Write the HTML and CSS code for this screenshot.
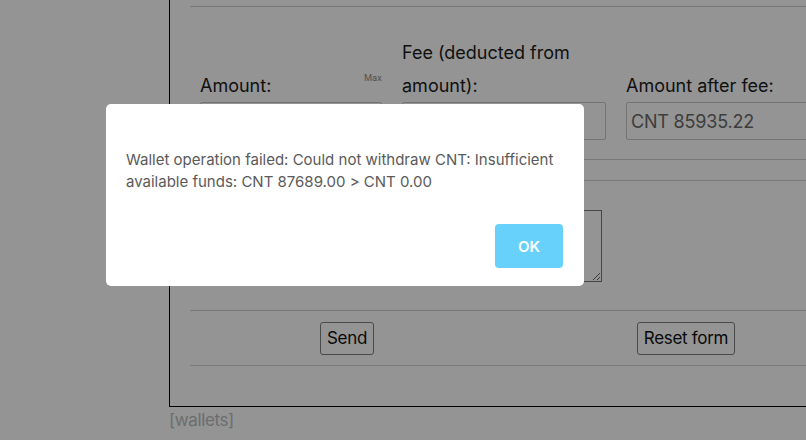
FILE: index.html
```html
<!DOCTYPE html>
<html lang="en">
<head>
    <meta charset="UTF-8">
    <meta name="viewport" content="width=device-width, initial-scale=1.0">
    <title>Withdraw</title>
    <link rel="stylesheet" href="styles.css">
</head>
<body>

    <div class="panel">
        <div class="row fields">
            <div class="cell">
                <div class="label-line">
                    <span class="label">Amount:</span>
                    <span class="max">Max</span>
                </div>
                <input class="field" type="text" value="">
            </div>
            <div class="cell">
                <span class="label">Fee (deducted from amount):</span>
                <input class="field" type="text" value="">
            </div>
            <div class="cell">
                <span class="label">Amount after fee:</span>
                <input class="field" type="text" value="CNT 85935.22">
            </div>
        </div>
        <div class="row spacer"></div>
        <div class="row note">
            <div class="cell"><span class="label">Note:</span></div>
            <div class="cell"><textarea class="memo"></textarea></div>
        </div>
        <div class="row actions">
            <div class="action"><button class="btn">Send</button></div>
            <div class="action"><button class="btn">Reset form</button></div>
        </div>
    </div>
    <div class="crumb">[wallets]</div>

    <div class="overlay">
        <div class="dialog">
            <p class="dialog-text">Wallet operation failed: Could not withdraw CNT: Insufficient available funds: CNT 87689.00 &gt; CNT 0.00</p>
            <div class="dialog-foot">
                <button class="ok">OK</button>
            </div>
        </div>
    </div>

</body>
</html>
```

FILE: styles.css
```css
* {
  box-sizing: border-box;
}
html, body {
  overflow: hidden;
}
body {
  margin: 0;
  padding-left: 169px;
  font-family: Inter, "Noto Sans", sans-serif;
  font-size: 18px;
  color: #1c1c1c;
  background: #fff;
  height: 440px;
}

.panel {
  width: 780px;
  border: 1px solid #000;
  border-top: none;
  padding: 6px 0 40px 20px;
}

.row {
  border-top: 1px solid #cfcfcf;
  display: flex;
}
.fields {
  height: 153px;
}
.cell {
  display: flex;
  flex-direction: column;
  justify-content: flex-end;
  padding: 0 10px 19px 10px;
  width: 224px;
}
.cell:first-child {
  width: 202px;
}
.label {
  line-height: 33px;
}
.label-line {
  display: flex;
  justify-content: space-between;
  align-items: flex-start;
}
.max {
  font-size: 9px;
  line-height: 18px;
  color: #8a8a8a;
}
.field {
  height: 38px;
  width: 100%;
  border: 1px solid #c8c8c8;
  border-radius: 2px;
  font-family: inherit;
  font-size: 18px;
  color: #6a6a6a;
  padding: 0 4px;
  letter-spacing: -0.2px;
}

.spacer {
  height: 21px;
}

.note {
  height: 130px;
}
.note .cell {
  justify-content: flex-start;
  padding-top: 29px;
}
.note .label {
  visibility: hidden;
}
.memo {
  width: 200px;
  height: 72px;
  border: 1px solid #777;
  resize: both;
}

.actions {
  height: 56px;
  border-bottom: 1px solid #cfcfcf;
  align-items: center;
}
.action {
  width: 314px;
  display: flex;
  justify-content: center;
}
.action:last-child {
  width: 364px;
}
.btn {
  font-family: inherit;
  font-size: 17px;
  letter-spacing: -0.3px;
  color: #111;
  background: #fff;
  border: 1px solid #808080;
  border-radius: 3px;
  height: 33px;
  padding: 0 6px;
}

.crumb {
  color: #b9bdc0;
  font-size: 17px;
  padding-top: 3px;
  letter-spacing: -0.4px;
}

.overlay {
  position: fixed;
  top: 0;
  left: 0;
  right: 0;
  bottom: 0;
  background: rgba(0, 0, 0, 0.42);
}
.dialog {
  position: absolute;
  left: 106px;
  top: 104px;
  width: 478px;
  height: 182px;
  background: #fff;
  border-radius: 5px;
  padding: 20px 21px 18px 20px;
  display: flex;
  flex-direction: column;
}
.dialog-text {
  margin: 25px 0 0 0;
  font-size: 15px;
  line-height: 22px;
  color: #5a5a5a;
}
.dialog-foot {
  margin-top: auto;
  display: flex;
  justify-content: flex-end;
}
.ok {
  width: 68px;
  height: 44px;
  border: none;
  border-radius: 4px;
  background: #67d1fb;
  color: #fff;
  font-family: inherit;
  font-size: 15px;
  font-weight: 600;
}
```
